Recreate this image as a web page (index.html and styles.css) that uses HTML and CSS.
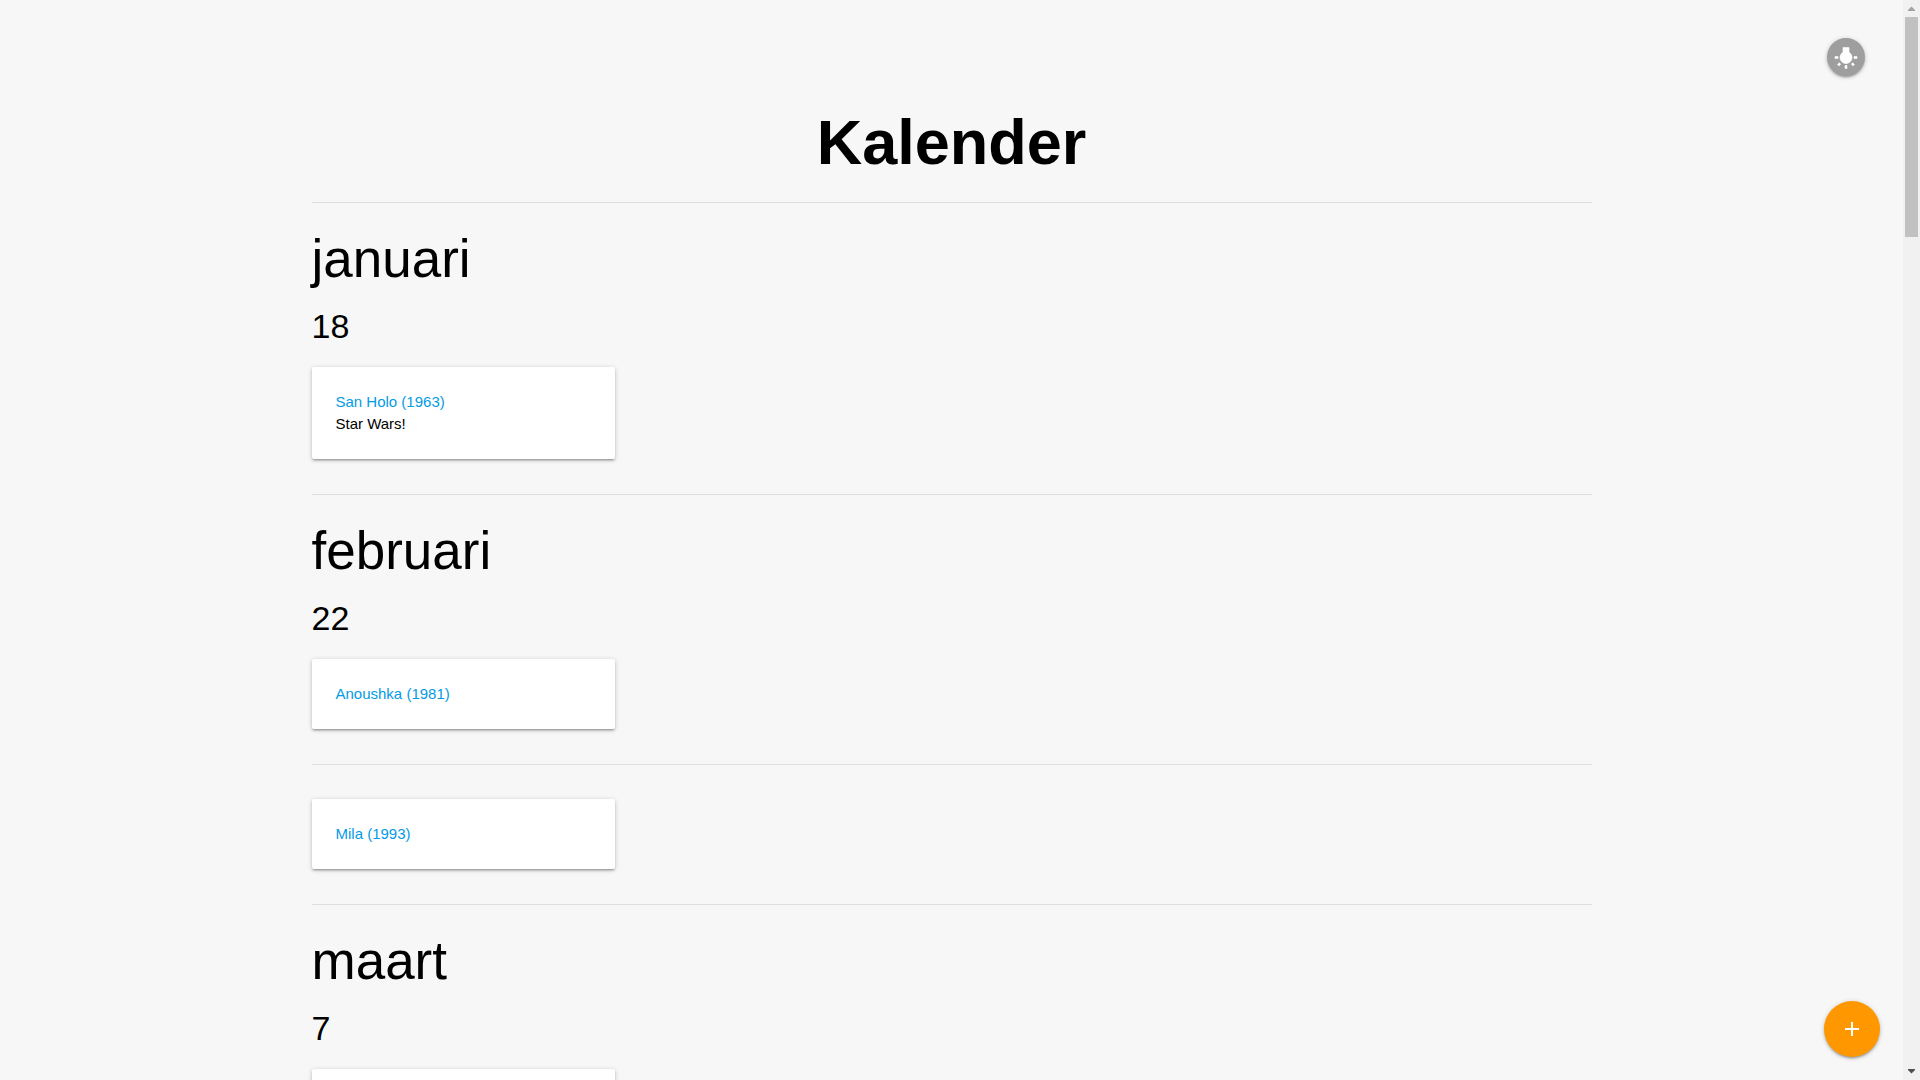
FILE: index.html
```
<!DOCTYPE html>
<html lang="nl">
<head>
<meta charset="utf-8">
<meta name="viewport" content="width=device-width, initial-scale=1">
<title>Kalender</title>
<link rel="stylesheet" href="styles.css">
</head>
<body>
<div class="viewport">
  <main class="page">
    <div class="container">
      <h1>Kalender</h1>
      <section class="month">
        <h2>januari</h2>
        <h3>18</h3>
        <div class="card"><a href="#san-holo">San Holo (1963)</a><p>Star Wars!</p></div>
      </section>
      <section class="month">
        <h2>februari</h2>
        <h3>22</h3>
        <div class="card"><a href="#anoushka">Anoushka (1981)</a></div>
      </section>
      <section class="month month-continued">
        <div class="card"><a href="#mila">Mila (1993)</a></div>
      </section>
      <section class="month">
        <h2>maart</h2>
        <h3>7</h3>
        <div class="card"></div>
      </section>
    </div>
    <button class="fab fab-theme" type="button" aria-label="Thema wisselen">
      <svg viewBox="0 0 24 24" aria-hidden="true"><path d="M3.55 18.54l1.41 1.41 1.79-1.8-1.41-1.41-1.79 1.8zM11 22.45h2V19.5h-2v2.95zM4 10.5H1v2h3v-2zm11-4.19V1.5H9v4.81C7.21 7.35 6 9.28 6 11.5c0 3.31 2.69 6 6 6s6-2.69 6-6c0-2.22-1.21-4.15-3-5.19zm5 4.19v2h3v-2h-3zm-2.76 7.66l1.79 1.8 1.41-1.41-1.8-1.79-1.4 1.4z"/></svg>
    </button>
    <button class="fab fab-add" type="button" aria-label="Toevoegen">
      <svg viewBox="0 0 24 24" aria-hidden="true"><path d="M19 13h-6v6h-2v-6H5v-2h6V5h2v6h6v2z"/></svg>
    </button>
  </main>
  <div class="scrollbar" aria-hidden="true">
    <svg class="arrow arrow-up" viewBox="0 0 17 17"><path d="M5 11h7v-1L8.500 6.500 5 10z"/></svg>
    <div class="track"><div class="thumb"></div></div>
    <svg class="arrow arrow-down" viewBox="0 0 17 17"><path d="M5 6h7v1L8.500 10.500 5 7z"/></svg>
  </div>
</div>
</body>
</html>
```
FILE: styles.css
```
* {
  box-sizing: border-box;
}

body,
h1,
h2,
h3,
p {
  margin: 0;
}

body {
  background: #f7f7f7;
  color: #000;
  font-family: "Liberation Sans", Arial, sans-serif;
  font-size: 15px;
  line-height: 22px;
}

.viewport {
  display: flex;
  height: 100vh;
  overflow: hidden;
}

.page {
  position: relative;
  flex: 1;
  overflow: hidden;
}

.container {
  max-width: 1280px;
  margin: 0 auto;
  padding-top: 108px;
}

h1 {
  padding-bottom: 25px;
  font-size: 63px;
  font-weight: 700;
  line-height: 69px;
  text-align: center;
}

h2,
h3 {
  font-weight: 400;
}

h2 {
  margin-bottom: 19px;
  font-size: 53px;
  line-height: 58px;
}

h3 {
  margin-bottom: 22px;
  font-size: 34px;
  line-height: 38px;
}

.month {
  padding: 27px 0 35px;
  border-top: 1px solid #dedede;
}

.month-continued {
  padding-top: 34px;
}

.card {
  width: 303px;
  max-width: 100%;
  min-height: 70px;
  padding: 24px;
  border-radius: 2px;
  background: #fff;
  box-shadow: 0 2px 2px 0 rgba(0, 0, 0, 0.14),
    0 3px 1px -2px rgba(0, 0, 0, 0.12),
    0 1px 5px 0 rgba(0, 0, 0, 0.2);
}

.card a {
  display: block;
  color: #039be5;
  text-decoration: none;
}

.fab {
  position: absolute;
  display: flex;
  align-items: center;
  justify-content: center;
  padding: 0;
  border: 0;
  border-radius: 50%;
  color: #fff;
  cursor: pointer;
  box-shadow: 0 2px 2px 0 rgba(0, 0, 0, 0.14),
    0 3px 1px -2px rgba(0, 0, 0, 0.12),
    0 1px 5px 0 rgba(0, 0, 0, 0.2);
}

.fab svg {
  width: 24px;
  height: 24px;
  fill: currentColor;
}

.fab-theme {
  top: 38px;
  right: 38px;
  width: 38px;
  height: 38px;
  padding-top: 2px;
  background: #9e9e9e;
}

.fab-theme path {
  stroke: currentColor;
  stroke-width: 0.6;
}

.fab-add {
  right: 23px;
  bottom: 23px;
  width: 56px;
  height: 56px;
  background: #ff9800;
}

.scrollbar {
  display: flex;
  flex-direction: column;
  width: 17px;
  background: #f1f1f1;
}

.arrow {
  width: 17px;
  height: 17px;
}

.arrow-up {
  fill: #a3a3a3;
}

.arrow-down {
  fill: #505050;
}

.track {
  flex: 1;
  padding: 0 2px;
}

.thumb {
  height: 21%;
  background: #c1c1c1;
}
```
